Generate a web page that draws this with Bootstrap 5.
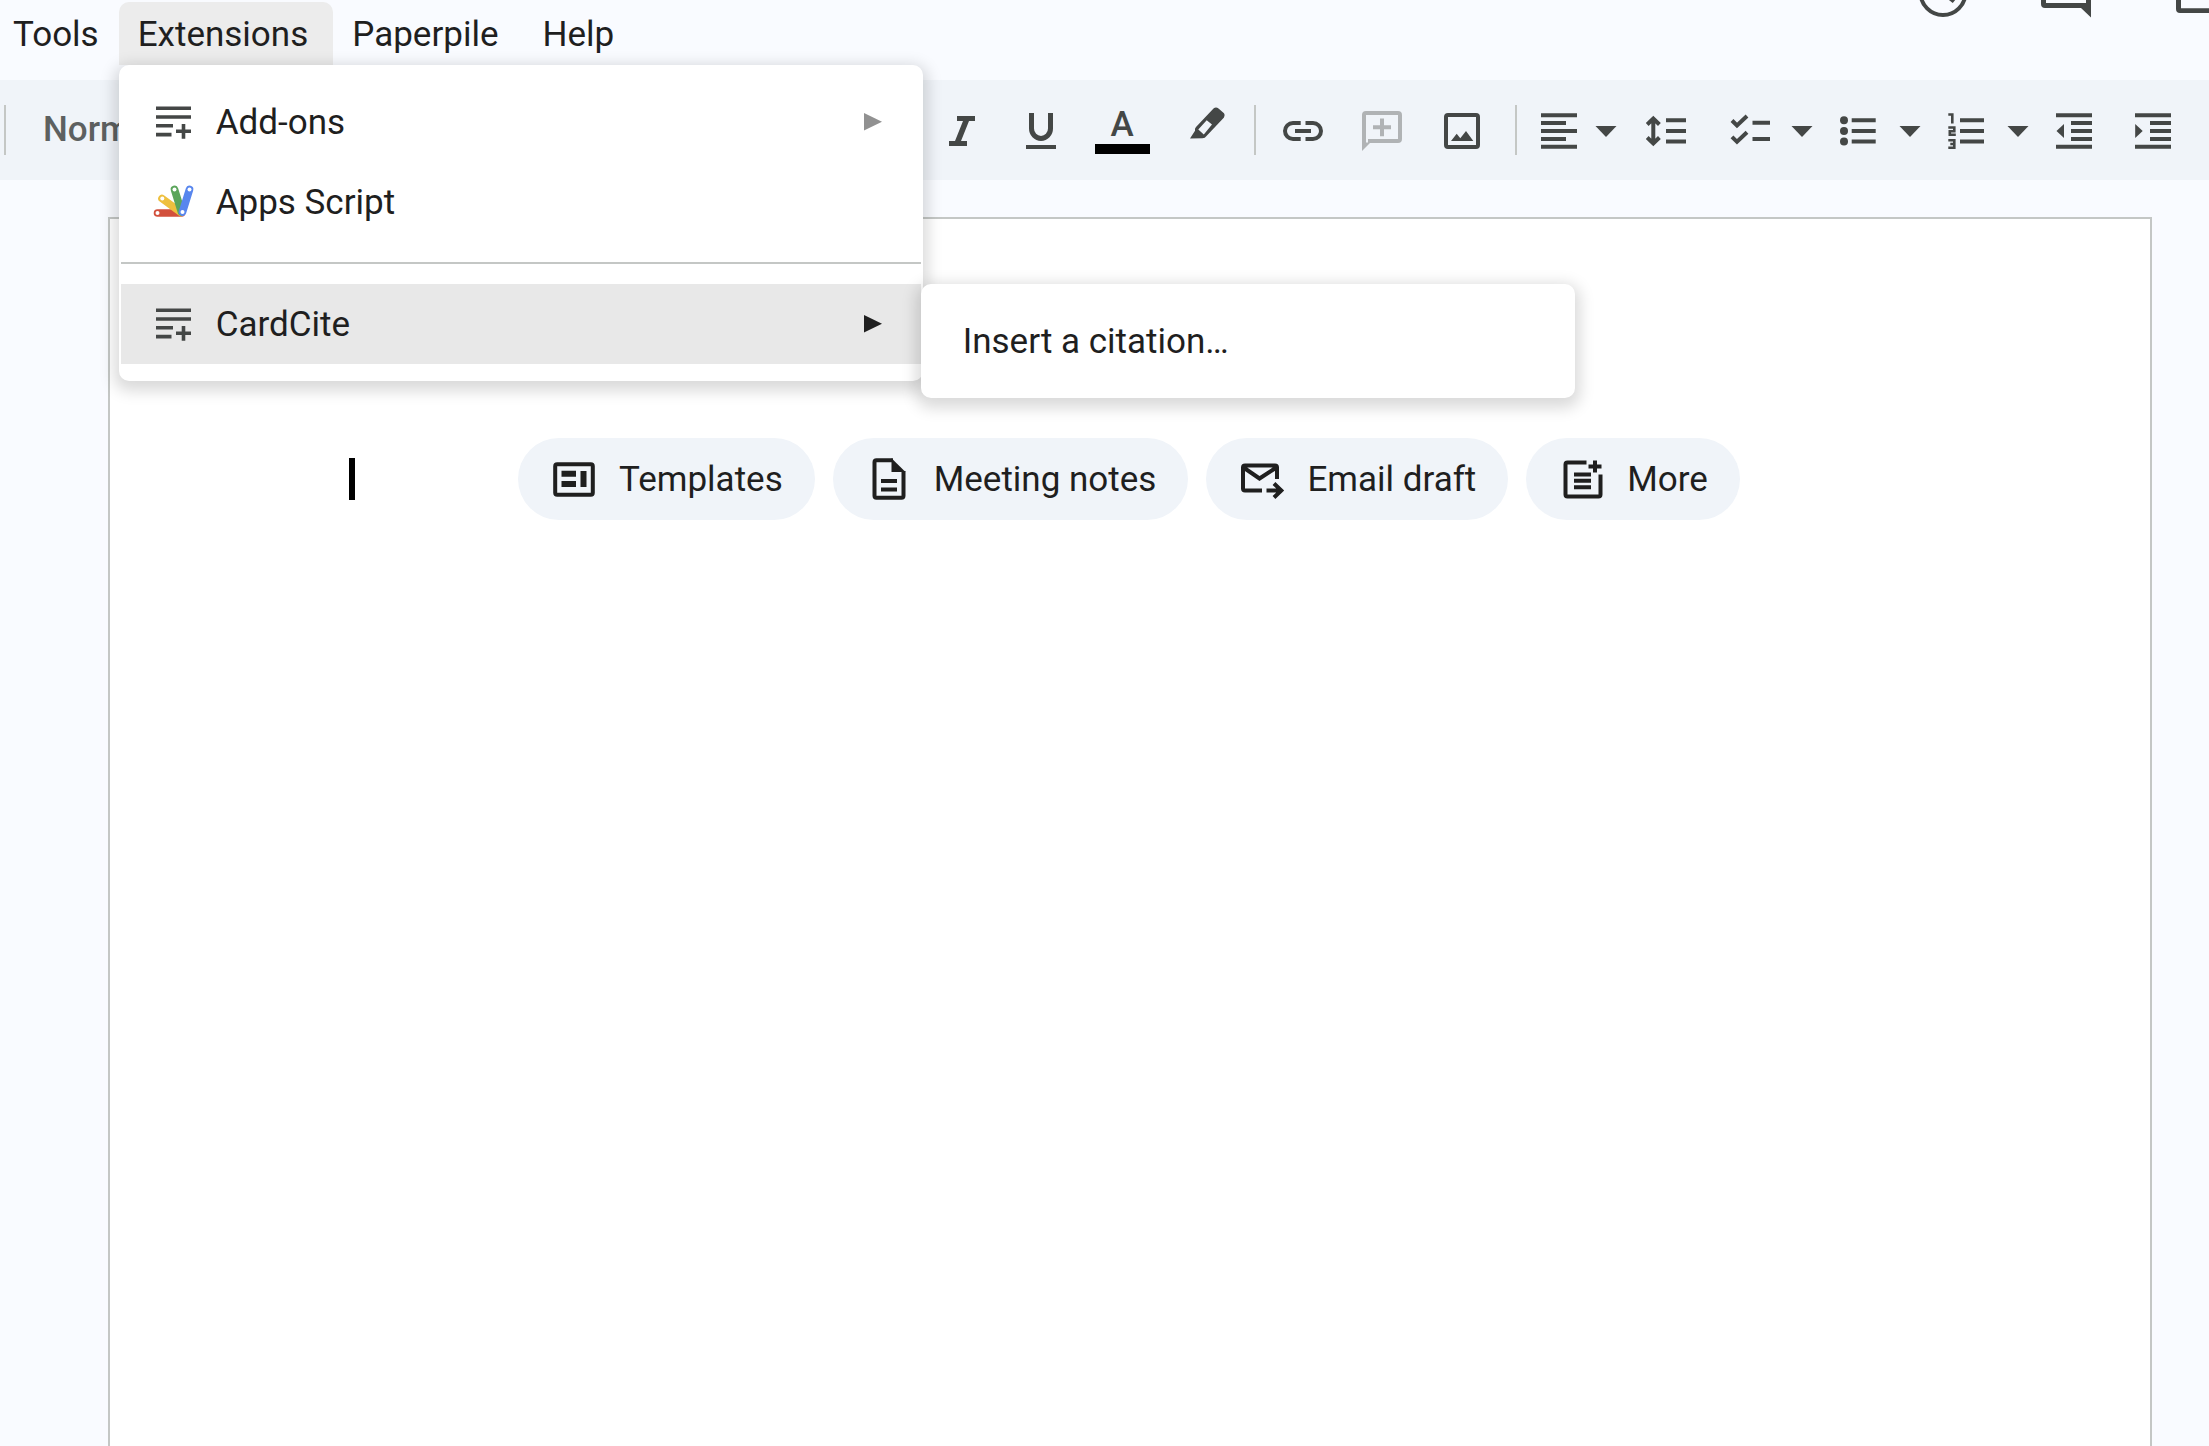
<!DOCTYPE html>
<html lang="en">
<head>
<meta charset="utf-8">
<meta name="viewport" content="width=device-width, initial-scale=1">
<title>Document editor</title>
<link href="https://cdn.jsdelivr.net/npm/bootstrap@5.3.0/dist/css/bootstrap.min.css" rel="stylesheet">
<style>
  :root { --ink: #1f1f1f; --icon: #444746; --line: #c4c7c5; --bar: #f0f4f9; }
  body { background: #f9fbff; color: var(--ink); font-family: Roboto, "Liberation Sans", sans-serif; font-size: 35px; line-height: 40px; overflow: hidden; min-height: 100vh; }
  svg { display: block; flex: none; }
  .plain { background: none; border: 0; padding: 0; color: inherit; font: inherit; line-height: 40px; }
  .caption-text { padding-top: 2px; }
  .menubar { height: 80px; padding-top: 2px; }
  .menu-tab { height: 63px; padding: 2px 25px 0 19px; border-radius: 10px 10px 0 0; }
  .menu-first { padding-left: 13px; padding-right: 20px; }
  .menu-open { background: #ececec; }
  .head-icons { color: var(--icon); margin-top: -2px; }
  .stroke { fill: none; stroke: currentColor; stroke-width: 4; }
  .menu-card { position: absolute; margin: 0; padding: 15px 0; list-style: none; background: #fff; border: 2px solid #fff; border-radius: 10px; box-shadow: 0 5px 15px 5px rgba(0, 0, 0, .15); }
  .menu-main { top: 63px; left: 0; width: 804px; z-index: 10; }
  .menu-sub { top: 0; left: 100%; width: 654px; z-index: 11; }
  .menu-row { width: 100%; height: 80px; padding: 0 39px 0 32px; gap: 21px; text-align: left; }
  .menu-sub .menu-row { padding-left: 40px; }
  .menu-active { background: #e8e8e8; }
  .menu-line { height: 2px; margin: 20px 0; background: var(--line); }
  .toolbar { height: 100px; background: var(--bar); color: var(--icon); }
  .tool-left { flex: 0 0 918px; }
  .style-name { padding-left: 37px; font-weight: 500; opacity: .85; }
  .rule { flex: none; width: 2px; height: 50px; background: var(--line); }
  .rule-mid { margin: 0 7px 0 12px; }
  .tool { flex: none; width: 80px; height: 70px; display: flex; align-items: center; justify-content: center; }
  .tool-narrow { width: 70px; }
  .tool-caret { width: 24px; margin-right: 4px; }
  .text-colour { flex-direction: column; font-weight: 500; color: var(--icon); }
  .text-colour span { line-height: 38px; }
  .swatch { width: 55px; height: 10px; background: #000; }
  .sheet { margin: 37px 57px 0 108px; min-height: 1300px; background: #fff; border: 2px solid var(--line); padding: 219px 0 0 239px; }
  .text-caret { width: 6px; height: 42px; background: #000; margin-right: 163px; }
  .chips { gap: 18px; }
  .chip { height: 82px; padding: 0 32px 0 31px; gap: 20px; border-radius: 41px; background: var(--bar); white-space: nowrap; }
</style>
<script src="https://cdn.jsdelivr.net/npm/bootstrap@5.3.0/dist/js/bootstrap.bundle.min.js"></script>
</head>
<body>
<svg width="0" height="0" class="position-absolute" aria-hidden="true">
  <symbol id="i-addon" viewBox="0 0 42 48"><path fill="none" stroke="#444746" stroke-width="3.6" d="M3 10.2h35M3 19h35M3 27.8h17M3 36.6h15.500M23 33.300h15M30.500 26v14.700"/></symbol>
  <symbol id="i-caret" viewBox="0 0 24 48"><path fill="currentColor" d="M1.500 20h21l-10.500 11z"/></symbol>
  <symbol id="i-arrow" viewBox="0 0 18 18"><path fill="currentColor" d="M0 0v17.500l18-8.700z"/></symbol>
</svg>

<header>
  <nav class="menubar d-flex align-items-start" aria-label="Menu bar">
    <button class="plain menu-tab menu-first">Tools</button>
    <div class="position-relative">
      <button class="plain menu-tab menu-open" aria-expanded="true">Extensions</button>
      <ul class="menu-card menu-main">
        <li><button class="plain menu-row d-flex align-items-center">
          <svg width="42" height="48"><use href="#i-addon"/></svg><span class="caption-text flex-grow-1">Add-ons</span>
          <svg width="18" height="18" color="#919191"><use href="#i-arrow"/></svg></button></li>
        <li><button class="plain menu-row d-flex align-items-center">
          <svg width="42" height="48" viewBox="0 0 42 48" fill="none" stroke-linecap="round" stroke-width="7.600">
            <path stroke="#d2503c" d="M4.500 35h24"/><path stroke="#eec03f" d="M9 20.500L28 34.500"/><path stroke="#5ba55b" d="M21.500 11.500L28.500 34"/><path stroke="#5886ee" d="M36.500 11.500L29.500 34"/>
            <g fill="#fff"><circle cx="4.500" cy="35" r="2"/><circle cx="9.300" cy="20.500" r="2"/><circle cx="21.500" cy="11.500" r="2"/><circle cx="36.500" cy="11.500" r="2"/><circle cx="29.500" cy="34" r="2"/></g>
          </svg><span class="caption-text">Apps Script</span></button></li>
        <li class="menu-line" role="separator"></li>
        <li class="position-relative"><button class="plain menu-row menu-active d-flex align-items-center" aria-expanded="true">
          <svg width="42" height="48"><use href="#i-addon"/></svg><span class="caption-text flex-grow-1">CardCite</span>
          <svg width="18" height="18"><use href="#i-arrow"/></svg></button>
          <ul class="menu-card menu-sub"><li><button class="plain menu-row d-flex align-items-center"><span class="caption-text">Insert a citation…</span></button></li></ul>
        </li>
      </ul>
    </div>
    <button class="plain menu-tab">Paperpile</button>
    <button class="plain menu-tab">Help</button>
    <div class="head-icons d-flex ms-auto">
      <button class="plain" aria-label="Version history"><svg width="123" height="18" viewBox="0 0 123 18" class="stroke"><circle cx="25" cy="-7.500" r="22.500"/><path d="M24-8l12 9.500"/></svg></button>
      <button class="plain" aria-label="Comments"><svg width="135" height="18" viewBox="0 0 135 18" fill="currentColor"><path d="M0-9V4q0 4 4 4h36l10 9.500V-9h-5V3H5V-9z"/></svg></button>
      <button class="plain" aria-label="Video call"><svg width="33" height="18" viewBox="0 0 33 18" fill="currentColor"><path d="M0-9V9q0 4 4 4h32V8.300H5V-9z"/></svg></button>
    </div>
  </nav>

  <div class="toolbar d-flex align-items-center ps-1" role="toolbar" aria-label="Formatting">
    <div class="tool-left d-flex align-items-center"><span class="rule"></span><button class="plain style-name">Normal text</button></div>
    <button class="plain tool" aria-label="Italic"><svg width="48" height="48" fill="currentColor"><path d="M19 10h18v5h-6l-8 20h6v5H11v-5h6l8-20h-6z"/></svg></button>
    <button class="plain tool" aria-label="Underline"><svg width="48" height="48" class="stroke"><path stroke-width="5" d="M13.500 7v15.500a9.500 10 0 0 0 19 0V7"/><path d="M8 41h30"/></svg></button>
    <button class="plain tool text-colour" aria-label="Text colour"><span>A</span><i class="swatch"></i></button>
    <button class="plain tool" aria-label="Highlight colour"><svg width="48" height="48" fill="currentColor"><path fill-rule="evenodd" d="M12 32.400l5-7.700q-.5-2 1-3.600L35.500 2.500q2.500-2.200 5 0L46 7.300q1.500 2 0 4.200L28.500 30q-1.500 2.200-4 2.200zM20.300 23.500l5.500 5L34 18.600l-5.300-4.300z"/></svg></button>
    <span class="rule rule-mid"></span>
    <button class="plain tool" aria-label="Insert link"><svg width="48" height="48" class="stroke"><path d="M21.700 17H14a8 8 0 0 0 0 16h7.700M26.500 17H34a8 8 0 0 1 0 16h-7.500M16 25h16"/></svg></button>
    <button class="plain tool" aria-label="Add comment" disabled><svg width="48" height="48" fill="none" stroke="#b0b3b5" stroke-width="4"><path d="M5 40V9q0-2 2-2h32q2 0 2 2v24q0 2-2 2H9M14 21.300h18M23 12.500v17.700"/><path fill="#b0b3b5" stroke="none" d="M3 45l8.500-8.500H3z"/></svg></button>
    <button class="plain tool" aria-label="Insert image"><svg width="48" height="48" class="stroke"><rect x="7" y="9" width="32" height="32" rx="2"/><path fill="currentColor" stroke="none" d="M12 35l5.700-7.300 3.600 4.600L27 25l7.300 10z"/></svg></button>
    <span class="rule rule-mid"></span>
    <button class="plain tool tool-narrow" aria-label="Align"><svg width="48" height="48" class="stroke"><path d="M6 9.200h36M6 17h25M6 25h36M6 33h25M6 40.800h36"/></svg></button>
    <button class="plain tool tool-caret" aria-label="Align options"><svg width="24" height="48"><use href="#i-caret"/></svg></button>
    <button class="plain tool ms-1" aria-label="Line spacing"><svg width="48" height="48" class="stroke"><path d="M24 14.300h20M24 25h20M24 35.600h20M11.300 13v24M5.200 18.500l6.100-6 6.100 6M5.200 31.500l6.100 6 6.100-6"/></svg></button>
    <button class="plain tool ms-1" aria-label="Checklist"><svg width="48" height="48" class="stroke"><path d="M6 14.500l5 5L21 10M6 30.800l5 5 10-9.500M26.500 16.700H44M26.500 33H44"/></svg></button>
    <button class="plain tool tool-caret" aria-label="Checklist options"><svg width="24" height="48"><use href="#i-caret"/></svg></button>
    <button class="plain tool" aria-label="Bulleted list"><svg width="48" height="48" class="stroke"><path d="M17.700 14.300h24M17.700 25h24M17.700 35.600h24"/><g fill="currentColor" stroke="none"><circle cx="10" cy="14.300" r="4"/><circle cx="10" cy="25" r="4"/><circle cx="10" cy="35.600" r="4"/></g></svg></button>
    <button class="plain tool tool-caret" aria-label="Bulleted list options"><svg width="24" height="48"><use href="#i-caret"/></svg></button>
    <button class="plain tool" aria-label="Numbered list"><svg width="48" height="48" class="stroke"><path d="M18 14.300h24M18 25h24M18 35.600h24"/><path stroke-width="2.600" d="M6.300 8.500h4v9M6.300 21.500h6v3.700H7.800v3.500h6M6.300 34.300h6v7.500h-6M8.300 38h4"/></svg></button>
    <button class="plain tool tool-caret" aria-label="Numbered list options"><svg width="24" height="48"><use href="#i-caret"/></svg></button>
    <button class="plain tool" aria-label="Decrease indent"><svg width="48" height="48" class="stroke"><path d="M6 9.200h36M21 17h21M21 25h21M21 33h21M6 40.800h36"/><path fill="currentColor" stroke="none" d="M6.500 25l7.500-7v14z"/></svg></button>
    <button class="plain tool" aria-label="Increase indent"><svg width="48" height="48" class="stroke"><path d="M5 9.200h36M20 17h21M20 25h21M20 33h21M5 40.800h36"/><path fill="currentColor" stroke="none" d="M12.700 25l-7.500-7v14z"/></svg></button>
  </div>
</header>

<main class="sheet">
  <div class="d-flex align-items-center">
    <span class="text-caret"></span>
    <div class="chips d-flex">
      <button class="plain chip d-flex align-items-center"><svg width="50" height="50" class="stroke"><rect x="6.200" y="10.200" width="37.600" height="30.500" rx="2"/><path stroke-width="6" d="M12.500 19.800H27M12.500 30H27"/><path stroke-width="6" d="M34.500 17v16"/></svg><span class="caption-text">Templates</span></button>
      <button class="plain chip d-flex align-items-center"><svg width="50" height="50" class="stroke"><path d="M29 6.200H12.500q-2 0-2 2v33.600q0 2 2 2h25q2 0 2-2V17M17 27h16M17 35.500h16"/><path fill="currentColor" stroke="none" d="M27.500 4.200L41.500 18h-14z"/></svg><span class="caption-text">Meeting notes</span></button>
      <button class="plain chip d-flex align-items-center"><svg width="50" height="50" class="stroke"><path d="M25 36.500H8q-2 0-2-2v-21q0-2 2-2h30q2 0 2 2V25M6.500 13.500L22.500 24.500 39.500 13.500M29.500 36.500h15M37 29.500l7.300 7-7.300 7"/></svg><span class="caption-text">Email draft</span></button>
      <button class="plain chip d-flex align-items-center"><svg width="50" height="50" class="stroke"><path d="M29.500 8.500H10.500q-2 0-2 2v30q0 2 2 2h31q2 0 2-2V20.500M17 20.500h17M17 26.800h17M17 33.200h17M31.500 12.500h13M38 6.500v12"/></svg><span class="caption-text">More</span></button>
    </div>
  </div>
</main>
</body>
</html>
